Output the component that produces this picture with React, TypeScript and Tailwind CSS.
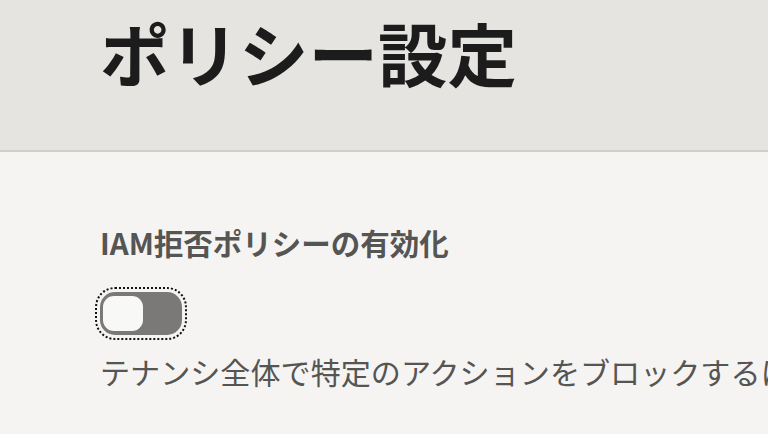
import React, { useState } from 'react';

const App: React.FC = () => {
  const [enabled, setEnabled] = useState(false);

  return (
    <div
      className="w-[768px] h-[434px] overflow-hidden bg-[#f5f4f2]"
      style={{ fontFamily: '"Noto Sans CJK JP", "Noto Sans", sans-serif' }}
    >
      {/* Header */}
      <header className="h-[152px] bg-[#e5e4e0] border-b-2 border-[#cfceca] px-[100px] pt-[12px]">
        <h1 className="text-[69.5px] leading-[80px] font-bold text-[#1c1c1c]">
          ポリシー設定
        </h1>
      </header>

      {/* Body */}
      <main className="px-[100px] pt-[70px]">
        <h2 className="text-[29.5px] leading-[40px] font-bold text-[#555553] whitespace-nowrap">
          IAM拒否ポリシーの有効化
        </h2>

        <div className="mt-[30px]">
          <button
            type="button"
            role="switch"
            aria-checked={enabled}
            onClick={() => setEnabled(!enabled)}
            className="w-[82px] h-[43px] rounded-[15px] bg-[#7a7977] p-[3px] flex items-center outline-2 outline-dotted outline-offset-[3px] outline-[#111]"
          >
            <span className="block w-[40px] h-[35px] rounded-[11px] bg-[#f8f8f7]" />
          </button>
        </div>

        <p className="mt-[14px] text-[30.1px] leading-[44px] text-[#555553] whitespace-nowrap">
          テナンシ全体で特定のアクションをブロックするには、このオプションを有効にしてください。
        </p>
      </main>
    </div>
  );
};

export default App;
